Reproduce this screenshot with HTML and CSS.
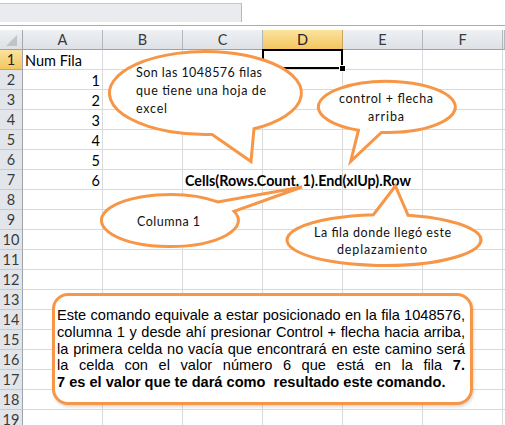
FILE: index.html
```html
<!DOCTYPE html>
<html lang="es">
<head>
<meta charset="utf-8">
<title>Excel - Cells(Rows.Count, 1).End(xlUp).Row</title>
<link rel="stylesheet" href="styles.css">
</head>
<body>
<div class="topbar"><div class="namebox"></div></div>
<div class="gap"></div>
<div class="sheet">
  <div class="corner"></div><div class="ch">A</div><div class="ch">B</div><div class="ch">C</div><div class="ch on">D</div><div class="ch">E</div><div class="ch">F</div><div class="ch last"></div>

  <div class="rh on">1</div><div class="c txt">Num Fila</div><div class="c"></div><div class="c"></div><div class="c sel"></div><div class="c"></div><div class="c"></div><div class="c last"></div>
  <div class="rh">2</div><div class="c num">1</div><div class="c"></div><div class="c"></div><div class="c"></div><div class="c"></div><div class="c"></div><div class="c last"></div>
  <div class="rh">3</div><div class="c num">2</div><div class="c"></div><div class="c"></div><div class="c"></div><div class="c"></div><div class="c"></div><div class="c last"></div>
  <div class="rh">4</div><div class="c num">3</div><div class="c"></div><div class="c"></div><div class="c"></div><div class="c"></div><div class="c"></div><div class="c last"></div>
  <div class="rh">5</div><div class="c num">4</div><div class="c"></div><div class="c"></div><div class="c"></div><div class="c"></div><div class="c"></div><div class="c last"></div>
  <div class="rh">6</div><div class="c num">5</div><div class="c"></div><div class="c"></div><div class="c"></div><div class="c"></div><div class="c"></div><div class="c last"></div>
  <div class="rh">7</div><div class="c num">6</div><div class="c"></div><div class="c formula"><span>Cells(Rows.Count, 1).End(xlUp).Row</span></div><div class="c"></div><div class="c"></div><div class="c"></div><div class="c last"></div>
  <div class="rh">8</div><div class="c"></div><div class="c"></div><div class="c"></div><div class="c"></div><div class="c"></div><div class="c"></div><div class="c last"></div>
  <div class="rh">9</div><div class="c"></div><div class="c"></div><div class="c"></div><div class="c"></div><div class="c"></div><div class="c"></div><div class="c last"></div>
  <div class="rh">10</div><div class="c"></div><div class="c"></div><div class="c"></div><div class="c"></div><div class="c"></div><div class="c"></div><div class="c last"></div>
  <div class="rh">11</div><div class="c"></div><div class="c"></div><div class="c"></div><div class="c"></div><div class="c"></div><div class="c"></div><div class="c last"></div>
  <div class="rh">12</div><div class="c"></div><div class="c"></div><div class="c"></div><div class="c"></div><div class="c"></div><div class="c"></div><div class="c last"></div>
  <div class="rh">13</div><div class="c"></div><div class="c"></div><div class="c"></div><div class="c"></div><div class="c"></div><div class="c"></div><div class="c last"></div>
  <div class="rh">14</div><div class="c"></div><div class="c"></div><div class="c"></div><div class="c"></div><div class="c"></div><div class="c"></div><div class="c last"></div>
  <div class="rh">15</div><div class="c"></div><div class="c"></div><div class="c"></div><div class="c"></div><div class="c"></div><div class="c"></div><div class="c last"></div>
  <div class="rh">16</div><div class="c"></div><div class="c"></div><div class="c"></div><div class="c"></div><div class="c"></div><div class="c"></div><div class="c last"></div>
  <div class="rh">17</div><div class="c"></div><div class="c"></div><div class="c"></div><div class="c"></div><div class="c"></div><div class="c"></div><div class="c last"></div>
  <div class="rh">18</div><div class="c"></div><div class="c"></div><div class="c"></div><div class="c"></div><div class="c"></div><div class="c"></div><div class="c last"></div>
  <div class="rh">19</div><div class="c"></div><div class="c"></div><div class="c"></div><div class="c"></div><div class="c"></div><div class="c"></div><div class="c last"></div>
</div>

<svg class="callouts" width="505" height="425" viewBox="0 0 505 425" xmlns="http://www.w3.org/2000/svg">
  <path class="bubble" d="M 212.2 134.4 A 96 41.5 0 1 1 254 128.8 L 251 161.5 Z"/>
  <path class="bubble" d="M 358.5 130.2 A 68.5 25.5 0 1 1 381.4 132.4 L 350.7 161.4 Z"/>
  <path class="bubble" d="M 234 211.3 A 68.5 26 0 1 1 217.8 201.9 L 302 187 Z"/>
  <path class="bubble" d="M 408.1 215.3 A 97 25.5 0 1 1 373.4 214.65 L 395.4 186 Z"/>

  <text class="btxt" x="136" y="77" textLength="126" lengthAdjust="spacing">Son las 1048576 filas</text>
  <text class="btxt" x="136" y="95" textLength="130" lengthAdjust="spacing">que tiene una hoja de</text>
  <text class="btxt" x="136" y="113" textLength="31" lengthAdjust="spacing">excel</text>

  <text class="btxt" x="339" y="103" textLength="94" lengthAdjust="spacing">control + flecha</text>
  <text class="btxt" x="368" y="121" textLength="36" lengthAdjust="spacing">arriba</text>

  <text class="btxt" x="137" y="226" textLength="63" lengthAdjust="spacing">Columna 1</text>

  <text class="btxt" x="314" y="237" textLength="137" lengthAdjust="spacing">La fila donde llegó este</text>
  <text class="btxt" x="337" y="254" textLength="90" lengthAdjust="spacing">deplazamiento</text>
</svg>

<div class="note">
  <div class="note-text">
    <span class="ln">Este comando equivale a estar posicionado en la fila 1048576,</span>
    <span class="ln">columna 1 y desde ahí presionar Control + flecha hacia arriba,</span>
    <span class="ln">la primera celda no vacía que encontrará en este camino será</span>
    <span class="ln">la celda con el valor número 6 que está en la fila <b>7.</b></span>
    <span class="ln final"><b>7 es el valor que te dará como&nbsp; resultado este comando.</b></span>
  </div>
</div>
</body>
</html>
```

FILE: styles.css
```css
html, body {
  margin: 0;
  padding: 0;
  background: #ffffff;
}

body {
  position: relative;
  width: 505px;
  height: 425px;
  overflow: hidden;
  font-family: "Lato", "Liberation Sans", sans-serif;
  color: #000;
}

.topbar {
  height: 22px;
  border-bottom: 1px solid #a9adb3;
}

.namebox {
  width: 241px;
  height: 18px;
  margin-top: 3px;
  background: #e9ebee;
  border-top: 1px solid #c3c6cb;
  border-right: 1px solid #b5b9bf;
}

.gap {
  height: 4px;
}

.sheet {
  display: grid;
  grid-template-columns: 23px repeat(6, 80px) 1fr;
  grid-auto-rows: 20px;
  font-size: 14.5px;
  line-height: 15px;
}

.sheet > div {
  box-sizing: border-box;
}

.corner {
  position: relative;
  background: linear-gradient(#eef0f2, #dde0e4);
  border-right: 1px solid #a3a8ae;
  border-bottom: 1px solid #9ea3a9;
}

.corner::after {
  content: "";
  position: absolute;
  right: 5px;
  bottom: 3px;
  width: 11px;
  height: 11px;
  background: #c0c4c9;
  clip-path: polygon(100% 0, 100% 100%, 0 100%);
}

.ch {
  display: flex;
  align-items: center;
  justify-content: center;
  background: linear-gradient(#eef0f3, #dde1e6);
  border-right: 1px solid #b3b7bd;
  border-bottom: 1px solid #9ea3a9;
  color: #3a3a3a;
}

.ch.on {
  background: linear-gradient(#fbe39e, #f4c65f);
  border-right-color: #c6a65c;
  color: #222;
}

.rh {
  display: flex;
  align-items: center;
  justify-content: center;
  background: #e2e6eb;
  border-right: 1px solid #9ea3a9;
  border-bottom: 1px solid #c7cbd0;
  color: #3a3a3a;
}

.rh.on {
  background: linear-gradient(#fbe39e, #f4c65f);
  border-bottom-color: #c6a65c;
  color: #222;
}

.c {
  display: flex;
  align-items: flex-end;
  padding-bottom: 1px;
  border-right: 1px solid #d9dadc;
  border-bottom: 1px solid #d9dadc;
  white-space: nowrap;
}

.c.last {
  border-right: none;
}

.c.txt {
  padding-left: 2px;
}

.c.num {
  justify-content: flex-end;
  padding-right: 2px;
}

.c.formula {
  overflow: visible;
  padding-left: 2px;
  font-weight: 700;
  font-size: 14.3px;
}

.c.formula span {
  position: relative;
  z-index: 1;
}

.c.sel {
  position: relative;
}

.c.sel::after {
  content: "";
  position: absolute;
  left: -1px;
  top: -1px;
  right: -1px;
  bottom: 0;
  border: 2px solid #000;
}

.c.sel::before {
  content: "";
  position: absolute;
  right: -4px;
  bottom: -3px;
  width: 5px;
  height: 5px;
  background: #000;
  border: 1px solid #fff;
  z-index: 2;
}

.callouts {
  position: absolute;
  left: 0;
  top: 0;
  z-index: 3;
  pointer-events: none;
}

.bubble {
  fill: #ffffff;
  stroke: #f79646;
  stroke-width: 3;
  stroke-linejoin: miter;
}

.btxt {
  font-family: "Lato", "Liberation Sans", sans-serif;
  font-size: 12.5px;
  fill: #111;
}

.note {
  position: absolute;
  left: 52px;
  top: 293px;
  width: 421px;
  height: 112px;
  box-sizing: border-box;
  border: 3px solid #f79646;
  border-radius: 16px;
  background: #fff;
  box-shadow: 1px 2px 3px rgba(0, 0, 0, 0.15);
  display: flex;
  align-items: center;
  padding-left: 2px;
  z-index: 4;
}

.note-text {
  width: 408px;
  font-family: "Liberation Sans", Arial, sans-serif;
  font-size: 14.6px;
  line-height: 16.8px;
}

.ln {
  display: block;
  white-space: nowrap;
  text-align: justify;
  text-align-last: justify;
}

.ln.final {
  text-align: left;
  text-align-last: left;
}
```
